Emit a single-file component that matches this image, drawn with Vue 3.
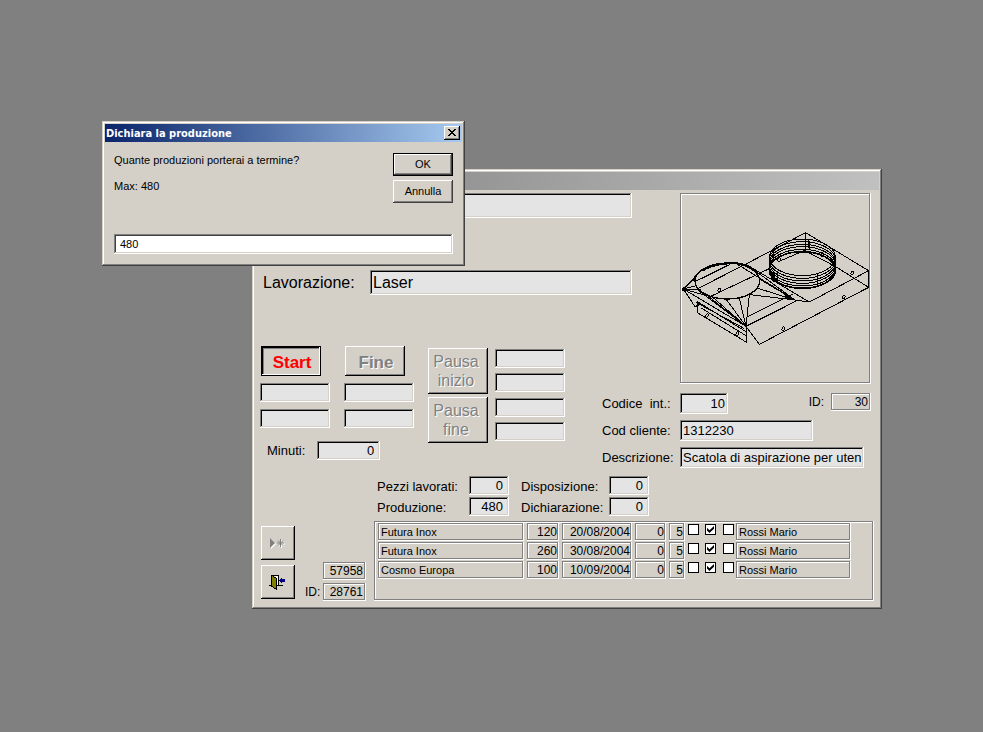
<template>
  <main class="desktop">
    <section class="window work-window">
      <div class="title-bar inactive"></div>
      <form class="work-body" @submit.prevent>
        <div class="top-grid">
          <div class="header-fields">
            <input v-model="work.name" class="field large name-field" type="text" aria-label="Nome" readonly />
            <label class="large-label" for="lavorazione">Lavorazione:</label>
            <input id="lavorazione" v-model="work.lavorazione" class="field large" type="text" readonly />
          </div>

          <div class="picture">
            <svg viewBox="36 90 561 561" role="img" aria-label="Scatola di aspirazione">
              <g fill="none" stroke="#000" stroke-width="3">
                <path d="M228 297 L407 203 L596 317 V367 L268 538 L228 484" />
                <path d="M596 317 L418 411 L375 405 M596 367 L497 305 L407 258 M407 203 V255 M418 228 V256" />
                <path d="M228 297 L75 375 M180 298 L75 350 M407 255 L330 288 M300 310 L120 395 M228 484 L385 405 M228 458 L368 388" />
                <ellipse
                  v-for="cy in ringLevels"
                  :key="cy"
                  cx="397"
                  :cy="cy"
                  rx="99"
                  ry="55"
                />
                <path d="M298 315 A99 55 0 0 1 496 315 A99 55 0 0 1 298 315" stroke-width="5" />
                <path d="M298 275 V320 M496 275 V320" stroke-width="5" />
                <path d="M310 250 V286 M416 225 V250 M443 328 V363" />
                <path d="M302 322 L322 352 M312 320 V352 M322 318 V354 M300 340 L324 340" stroke-width="5" />
                <ellipse cx="172" cy="348" rx="97" ry="54" stroke-width="4" />
                <path d="M97 318 Q118 300 175 295 Q215 292 245 308" stroke-width="6" />
                <path d="M40 372 L97 312 M40 372 L76 340 M40 372 L78 362 M40 372 L92 374 M40 372 L120 395" />
                <path d="M228 484 L40 372 M228 484 L105 386 M228 484 L125 394 M228 484 L168 402 M228 484 L208 400 M228 484 L238 389 M228 484 L80 372" />
                <path d="M375 405 L204 299 M375 405 L232 300 M375 405 L262 322 M375 405 L268 342 M375 405 L264 370 M375 405 L240 389 M418 411 L245 308" />
                <path d="M40 372 L75 425 L90 418 M82 410 V443 L228 531 V484 M82 410 L228 500 M92 428 L228 512 M78 412 L222 490 M228 484 L268 538" />
              </g>
              <circle cx="42" cy="372" r="6" />
              <path d="M340 384 L380 407 L350 402 Z" />
              <g fill="none" stroke="#000" stroke-width="3">
                <ellipse
                  v-for="hole in holes"
                  :key="hole[0]"
                  :cx="hole[0]"
                  :cy="hole[1]"
                  rx="4"
                  ry="6"
                  :transform="`rotate(25 ${hole[0]} ${hole[1]})`"
                />
              </g>
            </svg>
          </div>

          <div class="controls">
            <div class="phase-row">
              <div class="phase">
                <button class="btn phase-btn start" type="button">Start</button>
                <input class="field" type="text" aria-label="Data inizio" readonly />
                <input class="field" type="text" aria-label="Ora inizio" readonly />
              </div>
              <div class="phase">
                <button class="btn phase-btn" type="button" disabled>Fine</button>
                <input class="field" type="text" aria-label="Data fine" readonly />
                <input class="field" type="text" aria-label="Ora fine" readonly />
              </div>
              <div class="pauses">
                <div v-for="pause in pauses" :key="pause" class="pause">
                  <button class="btn pause-btn" type="button" disabled>Pausa<br />{{ pause }}</button>
                  <div class="pause-fields">
                    <input class="field" type="text" :aria-label="`Data pausa ${pause}`" readonly />
                    <input class="field" type="text" :aria-label="`Ora pausa ${pause}`" readonly />
                  </div>
                </div>
              </div>
            </div>
            <div class="minutes">
              <label for="minuti">Minuti:</label>
              <input id="minuti" v-model="work.minuti" class="field number" type="text" readonly />
            </div>
          </div>

          <div class="article">
            <label for="codice">Codice&nbsp; int.:</label>
            <div class="article-row">
              <input id="codice" v-model="article.codice" class="field number code" type="text" readonly />
              <span class="article-id">
                <label for="article-id">ID:</label>
                <input id="article-id" v-model="article.id" class="etched" type="text" readonly />
              </span>
            </div>
            <label for="cliente">Cod cliente:</label>
            <input id="cliente" v-model="article.cliente" class="field client" type="text" readonly />
            <label for="descrizione">Descrizione:</label>
            <input id="descrizione" v-model="article.descrizione" class="field description" type="text" readonly />
          </div>
        </div>

        <div class="counts">
          <template v-for="count in counts" :key="count.id">
            <label :for="count.id">{{ count.label }}</label>
            <input :id="count.id" v-model="count.value" class="field number" type="text" readonly />
          </template>
        </div>

        <div class="footer">
          <div class="nav-buttons">
            <button class="btn icon-btn" type="button" aria-label="Nuovo record" disabled>
              <svg width="18" height="13" viewBox="0 0 18 13">
                <g transform="translate(1 1)">
                  <path d="M1 1 V11 L6 6 Z" fill="#fff" />
                  <path d="M11.500 2 V10 M8 6 H15 M9 3.500 L14 8.500 M14 3.500 L9 8.500" stroke="#fff" />
                </g>
                <path d="M1 1 V11 L6 6 Z" fill="#808080" />
                <path d="M11.500 2 V10 M8 6 H15 M9 3.500 L14 8.500 M14 3.500 L9 8.500" stroke="#808080" />
              </svg>
            </button>
            <button class="btn icon-btn" type="button" aria-label="Chiudi maschera">
              <svg width="18" height="16" viewBox="0 0 18 16" shape-rendering="crispEdges">
                <path d="M3 1 H9 V11 H7 V3 Z" fill="#fff" />
                <path d="M2 1 L7 4 V15 L2 12 Z" fill="#808000" stroke="#000" />
                <path d="M2 1.500 H9.500 V11 M0 11.500 H3 M7 11.500 H14" fill="none" stroke="#000" />
                <path d="M10 6 L13 3 V5 H16 V8 H13 V10 Z" fill="#000080" />
              </svg>
            </button>
          </div>
          <div class="record-ids">
            <input v-model="work.order" class="etched" type="text" aria-label="Numero ordine" readonly />
            <label for="record-id">ID:</label>
            <input id="record-id" v-model="work.id" class="etched" type="text" readonly />
          </div>
          <div class="orders">
            <table>
              <colgroup>
                <col v-for="(width, i) in columnWidths" :key="i" :style="{ width: width + 'px' }" />
              </colgroup>
              <tbody>
                <tr v-for="(order, row) in orders" :key="row">
                  <td><div class="cell">{{ order.customer }}</div></td>
                  <td><div class="cell number">{{ order.quantity }}</div></td>
                  <td><div class="cell number">{{ order.date }}</div></td>
                  <td><div class="cell number">{{ order.done }}</div></td>
                  <td><div class="cell number">{{ order.priority }}</div></td>
                  <td v-for="(flag, i) in order.flags" :key="i" class="check-cell">
                    <input v-model="order.flags[i]" type="checkbox" :aria-label="`Stato ${i + 1}, riga ${row + 1}`" />
                  </td>
                  <td><div class="cell">{{ order.operator }}</div></td>
                </tr>
              </tbody>
            </table>
          </div>
        </div>
      </form>
    </section>

    <section v-if="dialogOpen" class="window dialog" role="dialog" aria-labelledby="dialog-title">
      <div class="title-bar">
        <h1 id="dialog-title">Dichiara la produzione</h1>
        <button class="btn close-btn" type="button" aria-label="Chiudi" @click="dialogOpen = false">
          <svg width="8" height="7" viewBox="0 0 8 7" shape-rendering="crispEdges">
            <path
              d="M0 0h2v1h-2z M6 0h2v1h-2z M1 1h2v1h-2z M5 1h2v1h-2z M2 2h4v1h-4z M3 3h2v1h-2z M2 4h4v1h-4z M1 5h2v1h-2z M5 5h2v1h-2z M0 6h2v1h-2z M6 6h2v1h-2z"
            />
          </svg>
        </button>
      </div>
      <form class="dialog-body" @submit.prevent="confirm">
        <div class="dialog-main">
          <label class="message" for="quantity">Quante produzioni porterai a termine?<br /><br />Max: {{ max }}</label>
          <div class="dialog-buttons">
            <button class="btn dialog-btn default" type="submit">OK</button>
            <button class="btn dialog-btn" type="button" @click="dialogOpen = false">Annulla</button>
          </div>
        </div>
        <input id="quantity" v-model="quantity" class="dialog-input" type="text" />
      </form>
    </section>
  </main>
</template>

<script setup>
  import { reactive, ref } from 'vue';

  const dialogOpen = ref(true);
  const max = 480;
  const quantity = ref('480');

  const work = reactive({
    name: '',
    lavorazione: 'Laser',
    minuti: '0',
    order: '57958',
    id: '28761',
  });

  const article = reactive({
    codice: '10',
    id: '30',
    cliente: '1312230',
    descrizione: 'Scatola di aspirazione per utensili',
  });

  const pauses = ['inizio', 'fine'];

  const counts = reactive([
    { id: 'pezzi', label: 'Pezzi lavorati:', value: '0' },
    { id: 'disposizione', label: 'Disposizione:', value: '0' },
    { id: 'produzione', label: 'Produzione:', value: '480' },
    { id: 'dichiarazione', label: 'Dichiarazione:', value: '0' },
  ]);

  const columnWidths = [149, 35, 73, 34, 19, 17, 18, 13, 118];

  const orders = reactive([
    { customer: 'Futura Inox', quantity: 120, date: '20/08/2004', done: 0, priority: 5, flags: [false, true, false], operator: 'Rossi Mario' },
    { customer: 'Futura Inox', quantity: 260, date: '30/08/2004', done: 0, priority: 5, flags: [false, true, false], operator: 'Rossi Mario' },
    { customer: 'Cosmo Europa', quantity: 100, date: '10/09/2004', done: 0, priority: 5, flags: [false, true, false], operator: 'Rossi Mario' },
  ]);

  // Part drawing: levels of the collar and centres of the screw holes
  const ringLevels = [277, 285, 293, 300, 308, 315];
  const holes = [
    [148, 375],
    [340, 491],
    [521, 396],
    [547, 324],
    [111, 452],
    [202, 506],
    [328, 283],
    [457, 268],
  ];

  const confirm = () => {
    counts[3].value = quantity.value;
    dialogOpen.value = false;
  };
</script>

<style>
  body {
    margin: 0;
    background: #808080;
  }
</style>

<style scoped>
  .desktop {
    position: relative;
    min-height: 100vh;
    background: #808080;
    color: #000;
    font-family: 'Liberation Sans', Arial, sans-serif;
    font-size: 13px;
    line-height: 16px;
  }

  .desktop * {
    box-sizing: border-box;
  }

  .window {
    position: absolute;
    padding: 3px;
    background: #d4d0c8;
    box-shadow:
      inset -1px -1px #404040,
      inset 1px 1px #d4d0c8,
      inset -2px -2px #808080,
      inset 2px 2px #fff;
  }

  .work-window {
    left: 252px;
    top: 169px;
    width: 630px;
  }

  .dialog {
    left: 102px;
    top: 121px;
    width: 363px;
  }

  .title-bar {
    display: flex;
    align-items: center;
    justify-content: space-between;
    height: 18px;
    padding: 0 2px 0 1px;
    background: linear-gradient(to right, #0a246a, #a6caf0);
  }

  .title-bar.inactive {
    background: linear-gradient(to right, #808080, #c0c0c0);
  }

  .title-bar h1 {
    margin: 0;
    color: #fff;
    font: bold 11px 'DejaVu Sans Condensed', Tahoma, sans-serif;
  }

  /* Shared controls */
  input,
  button {
    margin: 0;
    border: 0;
    border-radius: 0;
    color: #000;
    font: inherit;
    outline: none;
  }

  .field {
    width: 70px;
    height: 19px;
    padding: 2px 3px;
    background: #e4e4e4;
    box-shadow:
      inset -1px -1px #fff,
      inset 1px 1px #808080,
      inset -2px -2px #d4d0c8,
      inset 2px 2px #000;
  }

  .number {
    text-align: right;
  }

  input.number {
    padding-right: 6px;
  }

  .etched {
    width: 43px;
    height: 18px;
    padding: 2px 3px;
    background: #d4d0c8;
    font-size: 12px;
    text-align: right;
  }

  .etched,
  .cell,
  .picture,
  .orders {
    box-shadow:
      inset -1px -1px #fff,
      inset 1px 1px #808080,
      inset -2px -2px #808080,
      inset 2px 2px #fff;
  }

  .btn {
    padding: 0;
    background: #d4d0c8;
    text-align: center;
    box-shadow:
      inset -1px -1px #000,
      inset 1px 1px #fff,
      inset -2px -2px #808080;
  }

  .btn:disabled {
    color: #808080;
    text-shadow: 1px 1px #fff;
  }

  /* Work form */
  .work-body {
    padding: 3px 5px 5px;
  }

  .top-grid {
    display: grid;
    grid-template-columns: 1fr 30px 48px 191px;
    grid-template-rows: 153px 47px auto;
    padding-right: 3px;
  }

  .header-fields {
    grid-area: 1 / 1 / 2 / 3;
    display: grid;
    grid-template-columns: 107px 1fr;
    align-content: start;
    align-items: center;
    row-gap: 52px;
    padding-left: 3px;
  }

  .name-field {
    grid-column: 2;
  }

  .field.large {
    width: 100%;
    height: 25px;
    font-size: 16px;
  }

  .large-label {
    font-size: 16px;
  }

  .picture {
    grid-area: 1 / 4 / 3 / 5;
    align-self: start;
    padding: 2px;
  }

  .picture svg {
    display: block;
    width: 100%;
    shape-rendering: crispEdges;
  }

  .controls {
    grid-area: 2 / 1 / 4 / 2;
  }

  .phase-row {
    display: flex;
    gap: 14px;
  }

  .phase {
    display: flex;
    flex-direction: column;
    gap: 7px;
    width: 70px;
  }

  .phase-btn {
    width: 60px;
    height: 30px;
    padding: 3px 0 0 2px;
    margin-left: 1px;
    font-size: 17px;
    font-weight: bold;
  }

  .phase-btn.start {
    color: #f00;
    box-shadow:
      inset 0 0 0 1px #000,
      inset -2px -2px #fff,
      inset 2px 2px #000,
      inset 3px 3px #808080;
  }

  .pauses {
    display: flex;
    flex-direction: column;
    gap: 3px;
    padding-top: 2px;
  }

  .pause {
    display: flex;
    gap: 7px;
  }

  .pause-btn {
    width: 60px;
    height: 46px;
    padding-right: 4px;
    font-size: 16px;
    line-height: 19px;
  }

  .pause-fields {
    display: flex;
    flex-direction: column;
    gap: 5px;
    padding-top: 1px;
  }

  .minutes {
    display: flex;
    gap: 12px;
    align-items: center;
    padding-left: 7px;
    margin-top: -2px;
  }

  .minutes .field {
    width: 63px;
  }

  .article {
    grid-area: 3 / 2 / 4 / 5;
    display: grid;
    grid-template-columns: 78px 1fr;
    row-gap: 6px;
    align-items: center;
  }

  .article .field {
    height: 21px;
  }

  .article-row {
    display: flex;
    justify-content: space-between;
    align-items: flex-start;
  }

  .article .code {
    width: 48px;
    padding-right: 3px;
  }

  .article .client {
    width: 133px;
  }

  .article .description {
    width: 184px;
  }

  .article-id {
    display: flex;
    gap: 7px;
    align-items: center;
    font-size: 12px;
  }

  .article-id .etched {
    width: 40px;
  }

  .counts {
    display: grid;
    grid-template-columns: 92px 52px 88px 40px;
    row-gap: 2px;
    align-items: end;
    margin: 8px 0 0 117px;
  }

  .counts .field {
    width: 40px;
  }

  .footer {
    display: flex;
    align-items: flex-start;
    margin-top: 5px;
  }

  .nav-buttons {
    display: flex;
    flex-direction: column;
    gap: 5px;
    padding: 5px 10px 0 1px;
  }

  .icon-btn {
    display: flex;
    align-items: center;
    justify-content: center;
    width: 34px;
    height: 34px;
  }

  .record-ids {
    display: grid;
    grid-template-columns: 18px 43px;
    row-gap: 3px;
    align-items: center;
    align-self: flex-end;
    font-size: 12px;
  }

  .record-ids .etched:first-child {
    grid-column: 2;
  }

  .orders {
    flex: 1;
    height: 80px;
    margin-left: 8px;
    padding: 2px 4px;
  }

  table {
    width: 476px;
    border-collapse: collapse;
    table-layout: fixed;
  }

  td {
    height: 19px;
    padding: 0 3px 1px 0;
    vertical-align: top;
  }

  .cell {
    height: 18px;
    padding: 1px 3px;
    overflow: hidden;
    font-size: 11px;
    white-space: nowrap;
  }

  .cell.number {
    padding-right: 2px;
    font-size: 12px;
  }

  .check-cell {
    padding: 1px 0 0;
  }

  .check-cell input {
    display: block;
    width: 11px;
    height: 11px;
    appearance: none;
    background: #fff;
    border: 1px solid #000;
  }

  .check-cell input:checked::before {
    content: '';
    display: block;
    width: 7px;
    height: 7px;
    margin: 1px;
    background: #000;
    clip-path: polygon(0 25%, 35% 60%, 100% 0, 100% 40%, 35% 100%, 0 65%);
  }

  /* Input box */
  .dialog {
    font-size: 11px;
    line-height: 13px;
  }

  .close-btn {
    display: flex;
    align-items: center;
    justify-content: center;
    width: 16px;
    height: 14px;
    padding: 0 1px 1px 0;
  }

  .dialog-body {
    padding: 11px 9px 9px;
  }

  .dialog-main {
    display: flex;
    justify-content: space-between;
    margin-bottom: 31px;
  }

  .message {
    padding-top: 1px;
  }

  .dialog-buttons {
    display: flex;
    flex-direction: column;
    gap: 4px;
  }

  .dialog-btn {
    width: 60px;
    height: 23px;
    box-shadow:
      inset -1px -1px #404040,
      inset 1px 1px #fff,
      inset -2px -2px #808080;
  }

  .dialog-btn.default {
    box-shadow:
      inset 0 0 0 1px #000,
      inset -2px -2px #404040,
      inset 2px 2px #fff,
      inset -3px -3px #808080;
  }

  .dialog-input {
    display: block;
    width: 100%;
    height: 20px;
    padding: 2px 6px;
    background: #fff;
    box-shadow:
      inset -1px -1px #fff,
      inset 1px 1px #808080,
      inset -2px -2px #d4d0c8,
      inset 2px 2px #404040;
  }
</style>
